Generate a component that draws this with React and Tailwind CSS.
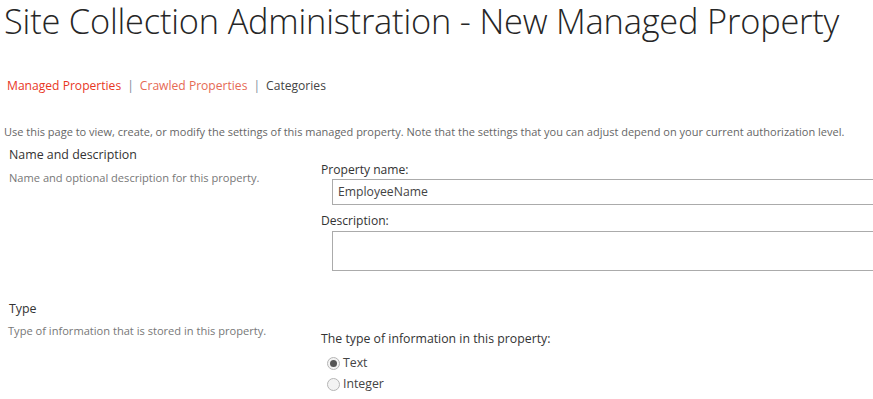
const font = { fontFamily: '"Open Sans", "Noto Sans", sans-serif' };

function Radio({ checked, label }) {
  return (
    <label className="flex items-center h-[21px] text-[12.3px] text-[#444]">
      <span className="w-[13px] h-[13px] rounded-full border border-[#b5b5b5] bg-[#f3f3f3] flex items-center justify-center mr-[3px] ml-[6px]">
        {checked && <span className="w-[7px] h-[7px] rounded-full bg-[#555]" />}
      </span>
      {label}
    </label>
  );
}

export default function App() {
  return (
    <div className="w-[873px] min-h-[399px] bg-white text-[#444]" style={font}>
      <h1 className="pl-[4px] text-[34.4px] leading-[42px] -mb-[2px] font-light text-[#262626] whitespace-nowrap tracking-[-0.2px]">
        Site Collection Administration - New Managed Property
      </h1>

      {/* links */}
      <div className="mt-[37px] pl-[7px] text-[12.1px] leading-[18px] whitespace-nowrap">
        <span className="text-[#e8371f]">Managed Properties</span>
        <span className="text-[#7a8a99] mx-[6px]">|</span>
        <span className="text-[#e66a55]">Crawled Properties</span>
        <span className="text-[#7a8a99] mx-[6px]">|</span>
        <span className="text-[#444]">Categories</span>
      </div>

      <p className="mt-[29px] pl-[4px] text-[11px] leading-[16px] text-[#666] whitespace-nowrap">
        Use this page to view, create, or modify the settings of this managed property. Note that the settings that you can adjust depend on your current authorization level.
      </p>

      {/* name and description */}
      <div className="flex mt-[5px]">
        <div className="w-[312px] pl-[9px] shrink-0">
          <div className="text-[12.4px] leading-[20px] text-[#333]">Name and description</div>
          <div className="text-[11.1px] leading-[16px] text-[#777] mt-[5px]">Name and optional description for this property.</div>
        </div>
        <div className="flex-1 pl-[9px] pt-[16px]">
          <div className="text-[12.1px] leading-[18px] text-[#333]">Property name:</div>
          <div className="ml-[11px] h-[26px] border border-r-0 border-[#ababab] flex items-center pl-[5px] text-[12.2px] text-[#444]">
            EmployeeName
          </div>
          <div className="text-[12.1px] leading-[18px] text-[#333] mt-[7px]">Description:</div>
          <div className="ml-[11px] mt-[1px] h-[40px] border border-r-0 border-[#ababab]" />
        </div>
      </div>

      {/* type */}
      <div className="flex mt-[28px]">
        <div className="w-[312px] pl-[9px] shrink-0">
          <div className="text-[12.4px] leading-[20px] text-[#333]">Type</div>
          <div className="text-[11.1px] leading-[16px] text-[#777] mt-[4px] -ml-[1px]">Type of information that is stored in this property.</div>
        </div>
        <div className="flex-1 pl-[9px] pt-[31px]">
          <div className="text-[12.3px] leading-[18px] text-[#333]">The type of information in this property:</div>
          <div className="mt-[5px]">
            <Radio checked label="Text" />
            <Radio label="Integer" />
          </div>
        </div>
      </div>
    </div>
  );
}
